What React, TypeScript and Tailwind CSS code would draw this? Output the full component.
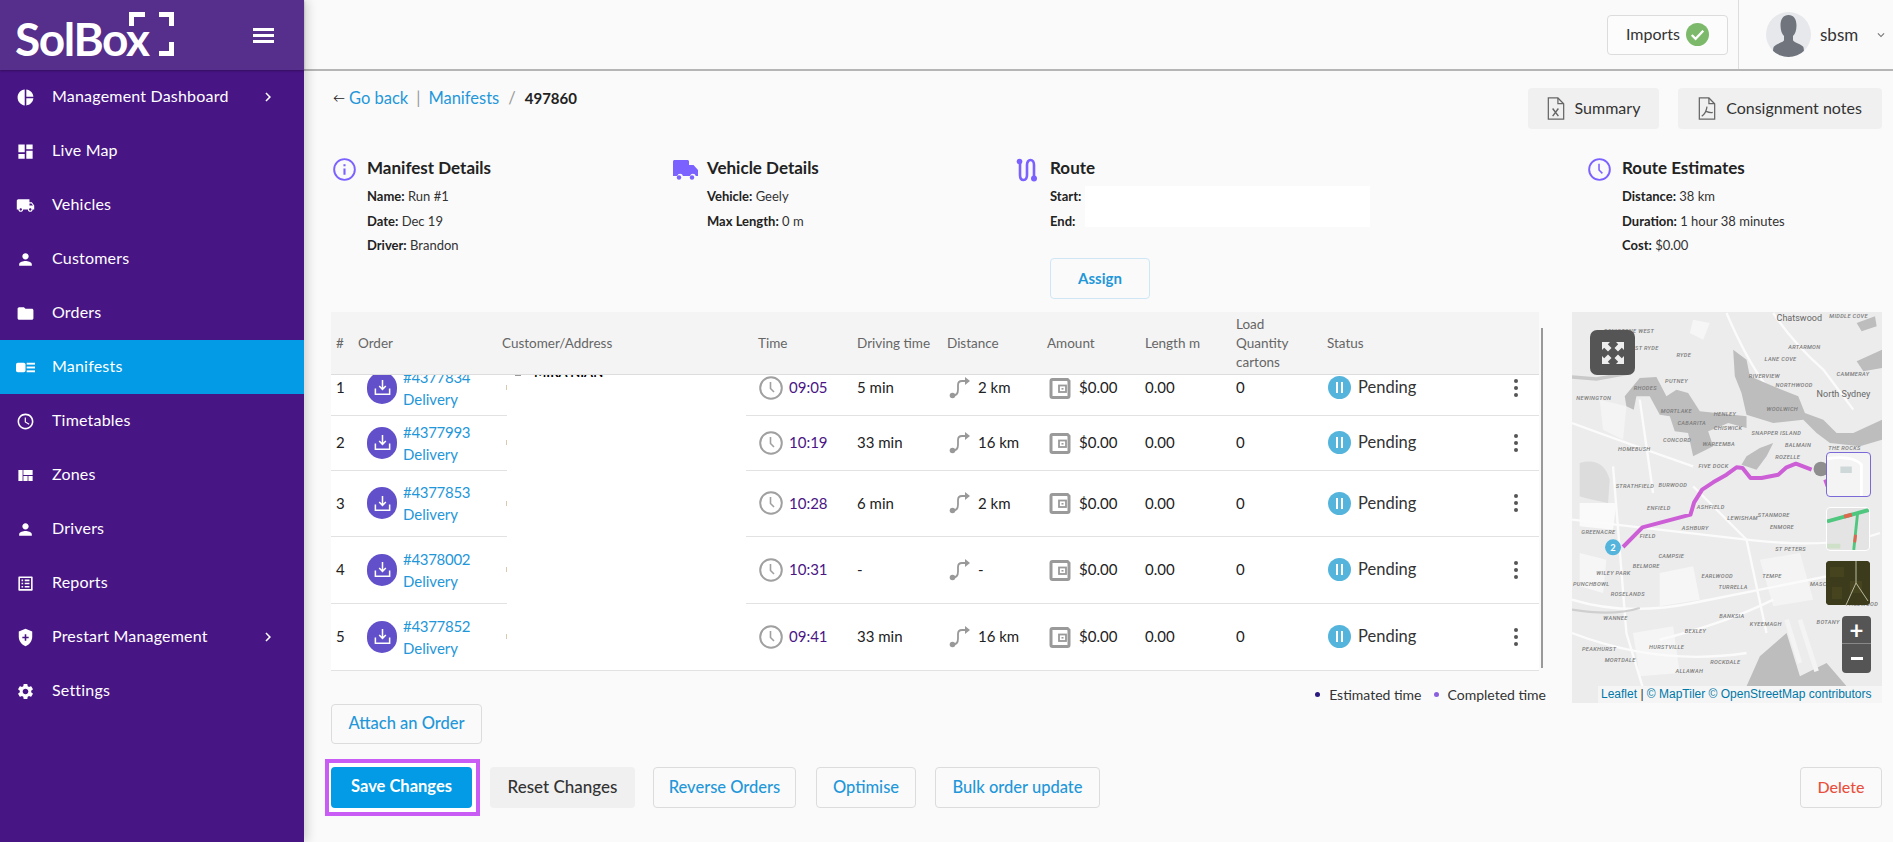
import {
  MdAccessTime,
  MdChevronRight,
  MdDashboard,
  MdFolder,
  MdKeyboardArrowDown,
  MdListAlt,
  MdLocalShipping,
  MdPerson,
  MdPieChart,
  MdSettings,
  MdViewQuilt,
} from "react-icons/md"

const ManifestIcon = ({ className }: { className?: string }) => (
  <svg viewBox="0 0 16 16" className={className} fill="currentColor">
    <rect x="0" y="4" width="8" height="8" rx="1.5" />
    <rect x="9" y="4" width="7" height="1.6" />
    <rect x="9" y="7.2" width="7" height="1.6" />
    <rect x="9" y="10.4" width="7" height="1.6" />
  </svg>
)

const ShieldIcon = ({ className }: { className?: string }) => (
  <svg viewBox="0 0 24 24" className={className}>
    <path fill="currentColor" d="M12 1 3.5 4.5v6.6c0 5.4 3.6 10.300 8.500 11.900 4.900-1.600 8.500-6.500 8.500-11.900V4.500L12 1z" />
    <path fill="#481585" d="M11 8h2v3h3v2h-3v3h-2v-3H8v-2h3z" />
  </svg>
)

const navItems = [
  { label: "Management Dashboard", icon: MdPieChart, arrow: true },
  { label: "Live Map", icon: MdDashboard },
  { label: "Vehicles", icon: MdLocalShipping },
  { label: "Customers", icon: MdPerson },
  { label: "Orders", icon: MdFolder },
  { label: "Manifests", icon: ManifestIcon, active: true },
  { label: "Timetables", icon: MdAccessTime },
  { label: "Zones", icon: MdViewQuilt },
  { label: "Drivers", icon: MdPerson },
  { label: "Reports", icon: MdListAlt },
  { label: "Prestart Management", icon: ShieldIcon, arrow: true },
  { label: "Settings", icon: MdSettings },
]

const rows = [
  { no: 1, order: "#4377834", time: "09:05", drive: "5 min", dist: "2 km", h: "h-[55px]" },
  { no: 2, order: "#4377993", time: "10:19", drive: "33 min", dist: "16 km", h: "h-[55px]" },
  { no: 3, order: "#4377853", time: "10:28", drive: "6 min", dist: "2 km", h: "h-[66px]" },
  { no: 4, order: "#4378002", time: "10:31", drive: "-", dist: "-", h: "h-[67px]" },
  { no: 5, order: "#4377852", time: "09:41", drive: "33 min", dist: "16 km", h: "h-[67px]" },
]

const cols = "grid grid-cols-[27px_144px_256px_99px_90px_100px_98px_91px_91px_1fr]"

const Logo = () => (
  <div className="relative w-[180px] h-[70px]">
    <div className="pl-[15px] pt-[11px] text-[46px] leading-[56px] font-bold text-white tracking-[-1.4px]">SolBox</div>
    <svg className="absolute left-0 top-0" width="180" height="70" viewBox="0 0 180 70" fill="#ffffff">
      <path d="M129 12h16v5h-11v9h-5z" />
      <path d="M159 12h15v14h-5v-9h-10z" />
      <path d="M169 42h5v14h-15v-5h10z" />
    </svg>
  </div>
)

const Sidebar = () => (
  <aside className="w-[304px] shrink-0 min-h-[842px] bg-[#481585] shadow-[3px_0_10px_rgba(0,0,0,0.18)] z-10">
    <div className="h-[70px] bg-[#562e8c] flex items-center justify-between pr-[30px] shadow-[0_1px_2px_rgba(0,0,0,0.3)]">
      <Logo />
      <div className="flex flex-col gap-[3px] w-[21px]">
        <span className="h-[3px] bg-white" />
        <span className="h-[3px] bg-white" />
        <span className="h-[3px] bg-white" />
      </div>
    </div>
    {navItems.map((item) => {
      const Icon = item.icon
      return (
        <div
          key={item.label}
          className={`h-[54px] flex items-center text-[16px] tracking-[0.2px] text-white ${item.active ? "bg-[#039be5]" : ""}`}
        >
          <span className="w-[52px] flex justify-center pr-[2px]">
            <Icon className="w-[19px] h-[19px]" />
          </span>
          <span className="flex-1 pb-[2px]">{item.label}</span>
          {item.arrow && <MdChevronRight className="w-[18px] h-[18px] mr-[27px]" />}
        </div>
      )
    })}
  </aside>
)

const CheckCircle = () => (
  <svg viewBox="0 0 24 24" className="w-[23px] h-[23px]">
    <circle cx="12" cy="12" r="12" fill="#7cb96a" />
    <path d="M6 12.500l4 4 8-8.500" fill="none" stroke="#fff" strokeWidth="2.400" />
  </svg>
)

const Avatar = () => (
  <svg viewBox="0 0 45 45" className="w-[45px] h-[45px] rounded-full bg-[#e7e8ec]">
    <path
      fill="#6f747d"
      d="M22.500 3c5 0 8 4 8 10.500 0 5-1.500 8.500-3.500 10.500v4c0 2 7 3.500 10 6.500 1 1.500 1 4 1 10.500H7c0-6.500 0-9 1-10.500 3-3 10-4.500 10-6.500v-4c-2-2-3.500-5.500-3.500-10.500C14.500 7 17.500 3 22.500 3z"
    />
  </svg>
)

const FileIcon = ({ mark }: { mark: "x" | "pdf" }) => (
  <svg viewBox="0 0 18 24" className="w-[18px] h-[23px]" fill="none" stroke="#666" strokeWidth="1.300">
    <path d="M1 1h10l6 6v16H1z" />
    <path d="M11 1v6h6" />
    {mark === "x" ? (
      <path d="M5.500 12l6 8M11.500 12l-6 8" strokeWidth="1.500" />
    ) : (
      <path d="M9 10c-.5 4-2.500 8-5.500 10M8 15c2.500 1 5 1.500 7 1" />
    )}
  </svg>
)

const InfoIcon = () => (
  <svg viewBox="0 0 24 24" className="w-[23px] h-[23px]" fill="none" stroke="#7b61ff" strokeWidth="2">
    <circle cx="12" cy="12" r="10.800" />
    <path d="M12 11v6.500M12 6.500v2" strokeWidth="2.200" />
  </svg>
)

const ClockIcon = ({ color, className }: { color: string; className: string }) => (
  <svg viewBox="0 0 24 24" className={className} fill="none" stroke={color} strokeWidth="2">
    <circle cx="12" cy="12" r="10.800" />
    <path d="M11.500 6v6.500l3.500 3.500" strokeWidth="1.600" />
  </svg>
)

const TruckIcon = () => (
  <svg viewBox="0 0 25 24" className="w-[25px] h-[24px]" fill="#7b61ff">
    <path d="M1.500 2h13c.8 0 1.500.7 1.500 1.500V7h4.500l4.500 5v6h-2.200a3 3 0 0 0-5.800 0h-7a3 3 0 0 0-5.800 0H0V3.500C0 2.700.7 2 1.500 2z" />
    <circle cx="6" cy="19.500" r="2.200" />
    <circle cx="19" cy="19.500" r="2.200" />
  </svg>
)

const RouteIcon = () => (
  <svg viewBox="0 0 22 24" className="w-[22px] h-[24px]" fill="none" stroke="#7b61ff" strokeWidth="2.600">
    <path d="M4 4v13c0 3 1 5 3.500 5S11 20 11 17V7c0-3 1.500-5 3.500-5S18 4 18 7v11" />
    <circle cx="3.500" cy="3.500" r="2.800" fill="#7b61ff" stroke="none" />
    <circle cx="18" cy="20.500" r="3" fill="#7b61ff" stroke="none" />
  </svg>
)

const DetailBlock = ({
  icon,
  title,
  items,
  children,
}: {
  icon: React.ReactNode
  title: string
  items: [string, string][]
  children?: React.ReactNode
}) => (
  <div className="flex">
    <div className="pt-[2px] w-[34px] shrink-0">{icon}</div>
    <div className="relative flex-1">
      <div className="h-[24px] leading-[24px] text-[17px] font-bold text-[#222]">{title}</div>
      <div className="mt-[4px] flex flex-col text-[13px] text-[#333]">
        {items.map(([k, v]) => (
          <div key={k} className="h-[24.500px] leading-[24px]">
            <span className="font-bold text-[#222]">{k}</span> {v}
          </div>
        ))}
      </div>
      {children}
    </div>
  </div>
)

const OrderIcon = () => (
  <span className="w-[30px] h-[32px] rounded-full bg-[#6150c9] flex items-center justify-center shrink-0">
    <svg viewBox="0 0 20 20" className="w-[19px] h-[19px]" fill="none" stroke="#fff" strokeWidth="1.600">
      <path d="M10 2v10M6.500 8.500 10 12l3.500-3.500" />
      <path d="M2.500 11v6h15v-6" />
    </svg>
  </span>
)

const DistanceIcon = () => (
  <svg viewBox="0 0 24 24" className="w-[24px] h-[24px]" fill="none" stroke="#999" strokeWidth="1.800">
    <circle cx="4.500" cy="19.500" r="2.800" fill="#999" stroke="none" />
    <path d="M5 19.500c4 0 5-2 5-6V9c0-3 1-4 4-4h4" />
    <path d="M17 1l5 4-5 4z" fill="#999" stroke="none" />
  </svg>
)

const WalletIcon = () => (
  <svg viewBox="0 0 22 24" className="w-[22px] h-[24px]" fill="none" stroke="#9a9a9a" strokeWidth="3">
    <path d="M18.500 3.500H3.500A1.500 1.500 0 0 0 2 5v15a1.500 1.500 0 0 0 1.500 1.500h15A1.500 1.500 0 0 0 20 20V5z" />
    <rect x="10" y="9.500" width="7" height="6.500" strokeWidth="1.800" />
    <rect x="12.500" y="12" width="2" height="1.600" fill="#9a9a9a" stroke="none" />
  </svg>
)

const PauseIcon = () => (
  <span className="w-[23px] h-[23px] rounded-full bg-[#54b4dc] flex items-center justify-center gap-[3px] shrink-0">
    <span className="w-[2px] h-[11px] bg-white" />
    <span className="w-[2px] h-[11px] bg-white" />
  </span>
)

const Kebab = () => (
  <span className="flex flex-col gap-[3px] ml-auto mr-[21px]">
    <span className="w-[4px] h-[4px] rounded-full bg-[#555]" />
    <span className="w-[4px] h-[4px] rounded-full bg-[#555]" />
    <span className="w-[4px] h-[4px] rounded-full bg-[#555]" />
  </span>
)

const Table = () => (
  <div className="relative w-[1208px]">
    <div className={`${cols} h-[63px] bg-[#f4f4f4] border-b border-[#ddd] items-center text-[13.500px] text-[#666]`}>
      <div className="pl-[5px]">#</div>
      <div>Order</div>
      <div>Customer/Address</div>
      <div>Time</div>
      <div>Driving time</div>
      <div>Distance</div>
      <div>Amount</div>
      <div>Length m</div>
      <div className="leading-[19px]">
        Load
        <br />
        Quantity
        <br />
        cartons
      </div>
      <div>Status</div>
    </div>
    <div className="relative h-[296px] overflow-hidden bg-white">
      <div className="-mt-[14px]">
        {rows.map((r) => (
          <div key={r.no} className={`${cols} ${r.h} pb-[1px] border-b border-[#e2e2e2] items-center text-[15px] text-[#222]`}>
            <div className="pl-[5px]">{r.no}</div>
            <div className="flex items-center pl-[9px] gap-[6px]">
              <OrderIcon />
              <div className="text-[#1f97d9] leading-[22px]">
                <div className="tracking-[-0.3px]">{r.order}</div>
                <div>Delivery</div>
              </div>
            </div>
            <div className="pl-[4px]">
              <span className="block w-[1px] h-[5px] bg-[#d9c9ae]" />
            </div>
            <div className="flex items-center gap-[6px] pl-[1px]">
              <ClockIcon color="#a0a0a0" className="w-[24px] h-[24px]" />
              <span className="text-[#4a1585]">{r.time}</span>
            </div>
            <div>{r.drive}</div>
            <div className="flex items-center gap-[6px] pl-[1px]">
              <DistanceIcon />
              <span>{r.dist}</span>
            </div>
            <div className="flex items-center gap-[8px] pl-[2px]">
              <WalletIcon />
              <span>$0.00</span>
            </div>
            <div>0.00</div>
            <div>0</div>
            <div className="flex items-center gap-[7px] pl-[1px]">
              <PauseIcon />
              <span className="text-[16.500px] text-[#333]">Pending</span>
              <Kebab />
            </div>
          </div>
        ))}
      </div>
      <div className="absolute left-[176px] top-0 w-[239px] h-[291px] bg-white">
        <div className="absolute left-[8px] top-0 w-[6px] h-[1px] bg-[#999]" />
        <div className="absolute left-[27px] top-0 h-[3px] overflow-hidden text-[13px] font-bold leading-[14px] text-black">
          <div className="-mt-[10px]">MIRA NIAN</div>
        </div>
      </div>
    </div>
    <div className="absolute left-[1210px] top-[16px] w-[2px] h-[340px] bg-[#999]" />
  </div>
)

const mapLabels: [string, number, number][] = [
  ["MIDDLE COVE", 808, 55], ["ARTARMON", 685, 147], ["LANE COVE", 614, 185], ["CAMMERAY", 830, 230],
  ["RIVERVIEW", 567, 235], ["NORTHWOOD", 647, 263], ["WOOLWICH", 620, 335], ["HENLEY", 462, 348],
  ["CABARITA", 353, 377], ["CHISWICK", 462, 392], ["SNAPPER ISLAND", 575, 406], ["WAREEMBA", 428, 438],
  ["BALMAIN", 675, 443], ["CONCORD", 310, 427], ["HOMEBUSH", 175, 455], ["THE ROCKS", 805, 451],
  ["ROZELLE", 646, 478], ["FIVE DOCK", 416, 505], ["STRATHFIELD", 168, 566], ["BURWOOD", 296, 561],
  ["ENFIELD", 262, 630], ["ASHFIELD", 411, 627], ["LEWISHAM", 502, 662], ["STANMORE", 594, 652],
  ["ENMORE", 630, 687], ["ASHBURY", 366, 690], ["GREENACRE", 65, 702], ["FIELD", 240, 716],
  ["ST PETERS", 646, 755], ["CAMPSIE", 296, 775], ["BELMORE", 219, 804], ["WILEY PARK", 110, 825],
  ["EARLWOOD", 425, 836], ["TEMPE", 607, 836], ["PUNCHBOWL", 40, 860], ["TURRELLA", 476, 868],
  ["MASCOT", 750, 860], ["ROSELANDS", 153, 890], ["BANKSIA", 478, 955], ["WANNEE", 131, 960],
  ["KYEEMAGH", 570, 980], ["BOTANY", 770, 972], ["BEXLEY", 375, 999], ["PEAKHURST", 67, 1055],
  ["HURSTVILLE", 268, 1049], ["MORTDALE", 135, 1088], ["ROCKDALE", 451, 1094], ["ALLAWAH", 347, 1120],
  ["RYDE", 350, 172], ["PUTNEY", 316, 251], ["RHODES", 222, 270], ["NEWINGTON", 50, 300],
  ["MORTLAKE", 303, 340], ["WEST RYDE", 200, 152], ["DENISTONE WEST", 133, 100], ["PAGEWOOD", 858, 920],
]

const whiteRoads = [
  "M37 660 Q300 690 560 720 T960 700",
  "M37 900 Q200 950 400 910 T800 830",
  "M160 500 L200 1000 L260 1200",
  "M500 40 Q560 180 620 260",
  "M640 40 Q700 130 790 210 L880 330",
  "M37 370 Q200 430 400 500",
  "M400 560 L560 720 L620 1000",
  "M300 1020 Q500 970 640 900",
  "M37 1000 Q300 1100 560 1060",
  "M240 300 L280 580",
]

const MapDrawing = () => (
  <svg className="block w-[310px] h-[391px]" viewBox="37 37 929 1173" preserveAspectRatio="none">
    <rect x="37" y="37" width="929" height="1173" fill="#ececec" />
    <path d="M60 490 Q130 470 150 540 L145 610 Q90 600 60 590z" fill="#dcdcdc" />
    <path d="M60 610 L170 610 L160 690 L60 680z" fill="#fafafa" />
    <path d="M400 60 L450 70 L430 120 L390 100z" fill="#f6f6f6" />
    <path d="M120 300 L200 320 L190 420 L130 390z" fill="#f4f4f4" />
    <path d="M600 780 L720 760 L760 900 L640 920z" fill="#f4f4f4" />
    <path d="M300 820 L400 800 L420 900 L300 920z" fill="#f6f6f6" />
    <path d="M60 760 L140 780 L130 880 L60 860z" fill="#f6f6f6" />
    <path d="M220 1000 L340 980 L360 1120 L240 1130z" fill="#f5f5f5" />
    {whiteRoads.map((d) => (
      <path key={d} d={d} fill="none" stroke="#fbfbfb" strokeWidth="7" />
    ))}
    <g fill="#bdbdbd">
      <path d="M195 290 L240 235 L290 232 L320 290 L350 270 L385 280 L420 335 L470 340 L520 345 L560 350 L560 385 L505 370 L470 385 L445 395 L460 440 L400 470 L385 400 L345 395 L330 350 L300 345 L270 290 L230 290 L222 330 L200 320z" />
      <path d="M520 150 L560 180 L570 230 L640 260 L715 290 L735 340 L790 360 L830 400 L880 400 L966 360 L966 420 L900 440 L810 430 L770 400 L730 360 L640 370 L560 345 L545 280 L525 230z" />
      <path d="M560 470 L600 445 L640 430 L620 470 L590 510 L545 495z" />
      <path d="M890 185 L966 150 L966 205 L910 215z" />
      <path d="M890 70 L945 50 L950 80 L905 95z" />
      <path d="M560 1160 L600 1070 L680 1000 L720 1130 L800 1090 L860 1160z" />
    </g>
    <path d="M37 232 L110 238 L200 222" fill="none" stroke="#c9c9c9" strokeWidth="10" />
    <path d="M680 960 L720 1090M720 960 L770 1115" stroke="#f4f4f4" strokeWidth="14" />
    <path d="M37 930 Q160 950 240 925" fill="none" stroke="#cfcfcf" strokeWidth="7" />
    <g fontFamily="Roboto, sans-serif" fontStyle="italic" fontWeight="500" fontSize="17" fill="#7a7a7a" letterSpacing="1">
      {mapLabels.map(([t, x, y]) => (
        <text key={t} x={x} y={y}>
          {t}
        </text>
      ))}
    </g>
    <g fontFamily="Roboto, sans-serif" fontSize="27" fill="#666">
      <text x="650" y="65">Chatswood</text>
      <text x="770" y="293">North Sydney</text>
    </g>
    <polyline
      points="190,742 248,683 392,645 403,608 427,570 460,548 500,525 530,503 548,505 572,535 605,535 655,525 680,503 708,492 755,510"
      fill="none"
      stroke="#cc5fd6"
      strokeWidth="12"
      strokeLinejoin="round"
    />
    <path d="M795 540 L802 560" stroke="#cc5fd6" strokeWidth="10" />
    <circle cx="783" cy="508" r="22" fill="#8e8e8e" />
    <circle cx="160" cy="743" r="24" fill="#54b4dc" />
    <text x="160" y="753" textAnchor="middle" fontFamily="Lato, sans-serif" fontWeight="700" fontSize="28" fill="#fff">
      2
    </text>
  </svg>
)

const MapPanel = () => (
  <div className="relative w-[310px] h-[391px] overflow-hidden">
    <MapDrawing />
    <div className="absolute left-[18px] top-[18px] w-[45px] h-[45px] rounded-[7px] bg-[#555] flex items-center justify-center">
      <svg viewBox="0 0 24 24" className="w-[24px] h-[24px]" fill="#eee">
        <path d="M1 1h8L6.800 3.200 10.500 7 7 10.500 3.200 6.800 1 9zM23 1v8l-2.200-2.200L17 10.500 13.500 7l3.700-3.800L15 1zM1 23v-8l2.200 2.200L7 13.500l3.500 3.500-3.700 3.800L9 23zM23 23h-8l2.200-2.200L13.500 17l3.500-3.500 3.800 3.700L23 15z" />
      </svg>
    </div>
    <div className="absolute left-[254px] top-[140px] w-[45px] h-[45px] rounded-[4px] border border-[#7a6ad8] bg-[#f4f4f4] overflow-hidden">
      <svg viewBox="0 0 45 45" className="w-full h-full">
        <path d="M14 14h12v7H14z" fill="#cfd8d8" />
        <path d="M0 6q26-4 36 6v33" fill="none" stroke="#fff" strokeWidth="3" />
      </svg>
    </div>
    <div className="absolute left-[254px] top-[195px] w-[44px] h-[44px] rounded-[4px] border border-white bg-[#e4e4e4] overflow-hidden">
      <svg viewBox="0 0 44 44" className="w-full h-full">
        <path d="M0 14 44 2" stroke="#4fc77f" strokeWidth="4" />
        <path d="M18 9 26 7" stroke="#e0664f" strokeWidth="4" />
        <path d="M32 6 28 44" stroke="#4fc77f" strokeWidth="3" />
        <path d="M30 28 29 36" stroke="#e0664f" strokeWidth="3" />
        <path d="M0 40h14" stroke="#cfe0c8" strokeWidth="5" />
      </svg>
    </div>
    <div className="absolute left-[254px] top-[249px] w-[44px] h-[44px] rounded-[4px] bg-[#3d3e1e] overflow-hidden">
      <svg viewBox="0 0 44 44" className="w-full h-full">
        <rect x="0" y="0" width="44" height="44" fill="#3c3c1c" />
        <path d="M4 6h14v10H4zM24 20h12v12H24zM6 26h10v12H6z" fill="#46441f" />
        <path d="M30 0v22L20 44M30 22l12 18" fill="none" stroke="#b8b8a0" strokeWidth="1" />
      </svg>
    </div>
    <div className="absolute left-[270px] top-[304px] w-[29px] h-[57px] rounded-[4px] bg-[#555] flex flex-col text-white">
      <div className="h-[28px] border-b border-[#888] flex items-center justify-center">
        <span className="text-[24px] leading-none font-bold">+</span>
      </div>
      <div className="flex-1 flex items-center justify-center">
        <span className="w-[12px] h-[3px] bg-white" />
      </div>
    </div>
    <div className="absolute right-0 bottom-0 w-[284px] h-[17px] bg-[#f5f5f5] pl-[3px] font-['Liberation_Sans',sans-serif] text-[12px] leading-[17px] text-[#0078a8] whitespace-nowrap">
      Leaflet <span className="text-[#333]">|</span> © MapTiler © OpenStreetMap contributors
    </div>
  </div>
)

const OutlineButton = ({ label, className }: { label: string; className: string }) => (
  <button className={`rounded-[4px] border border-[#dcdcdc] pb-[1px] text-[16.500px] font-medium text-[#1f97d9] ${className}`}>
    {label}
  </button>
)

const App = () => {
  return (
    <div className="flex min-h-[842px] bg-[#fafafa] font-['Lato',sans-serif]">
      <Sidebar />
      <main className="flex-1 min-w-0">
        <header className="h-[71px] border-b-2 border-[#b5b5b5] flex items-center justify-end">
          <div className="h-[40px] w-[121px] mr-[10px] rounded-[4px] border border-[#dcdcdc] bg-white/40 flex items-center justify-center gap-[6px] text-[16px] text-[#333]">
            <span className="pb-[1px]">Imports</span>
            <CheckCircle />
          </div>
          <div className="h-[69px] border-l border-[#ddd] pl-[27px] pr-[5px] flex items-center">
            <Avatar />
            <span className="ml-[9px] w-[41px] text-[17px] text-[#333]">sbsm</span>
            <MdKeyboardArrowDown className="ml-[13px] w-[14px] h-[14px] text-[#777]" />
          </div>
        </header>

        <div className="pl-[27px] pr-[11px] pt-[17px]">
          <div className="flex justify-between items-start h-[41px]">
            <div className="h-[20px] flex items-center text-[16.500px] text-[#1f97d9] pl-[2px]">
              <span className="text-[#222] text-[12px] w-[16px]">←</span>
              <span>Go back</span>
              <span className="mx-[8px] text-[#999]">|</span>
              <span>Manifests</span>
              <span className="mx-[9px] text-[#999]">/</span>
              <span className="font-bold text-[15px] text-[#222]">497860</span>
            </div>
            <div className="flex gap-[19px] text-[16px] text-[#333]">
              <button className="h-[41px] w-[131px] rounded-[4px] bg-[#f0f0f0] flex items-center justify-center gap-[10px]">
                <FileIcon mark="x" />
                <span className="pb-[2px]">Summary</span>
              </button>
              <button className="h-[41px] w-[204px] rounded-[4px] bg-[#f0f0f0] flex items-center justify-center gap-[10px]">
                <FileIcon mark="pdf" />
                <span className="pb-[2px]">Consignment notes</span>
              </button>
            </div>
          </div>

          <div className="mt-[27px] grid grid-cols-[340px_343px_572px_1fr] pl-[2px]">
            <DetailBlock
              icon={<InfoIcon />}
              title="Manifest Details"
              items={[
                ["Name:", "Run #1"],
                ["Date:", " Dec 19"],
                ["Driver:", "Brandon"],
              ]}
            />
            <DetailBlock
              icon={<TruckIcon />}
              title="Vehicle Details"
              items={[
                ["Vehicle:", "Geely"],
                ["Max Length:", "0 m"],
              ]}
            />
            <DetailBlock
              icon={<RouteIcon />}
              title="Route"
              items={[
                ["Start:", ""],
                ["End:", ""],
              ]}
            >
              <div className="absolute left-[35px] top-[30px] w-[285px] h-[41px] bg-white" />
              <button className="mt-[25px] block w-[100px] h-[41px] rounded-[4px] border border-[#cfe6f5] pb-[1px] text-[15px] font-bold text-[#1f97d9]">
                Assign
              </button>
            </DetailBlock>
            <DetailBlock
              icon={<ClockIcon color="#7b61ff" className="w-[23px] h-[23px]" />}
              title="Route Estimates"
              items={[
                ["Distance:", "38 km"],
                ["Duration:", "1 hour 38 minutes"],
                ["Cost:", "$0.00"],
              ]}
            />
          </div>

          <div className="mt-[13px] flex justify-between items-start">
            <div className="w-[1215px]">
              <Table />
              <div className="mt-[15px] h-[16px] flex justify-end items-center text-[14px] text-[#333]">
                <span className="w-[5px] h-[5px] rounded-full bg-[#2b1a80] mr-[9px]" />
                Estimated time
                <span className="w-[5px] h-[5px] rounded-full bg-[#8b5fe0] ml-[12px] mr-[9px]" />
                Completed time
              </div>
              <OutlineButton label="Attach an Order" className="mt-[2px] w-[151px] h-[40px] block" />
            </div>
            <MapPanel />
          </div>

          <div className="mt-[23px] flex items-center">
            <div className="-my-[8px] -ml-[6px] border-4 border-[#c85cf5] bg-white pl-[2px] pr-[4px] py-[4px]">
              <button className="block h-[41px] w-[141px] rounded-[4px] bg-[#039be5] pb-[2px] text-[16.500px] font-bold text-white">
                Save Changes
              </button>
            </div>
            <button className="ml-[10px] h-[41px] w-[145px] rounded-[4px] bg-[#f0f0f0] pb-[2px] text-[17px] font-medium text-[#333]">
              Reset Changes
            </button>
            <OutlineButton label="Reverse Orders" className="ml-[18px] w-[143px] h-[41px]" />
            <OutlineButton label="Optimise" className="ml-[20px] w-[100px] h-[41px]" />
            <OutlineButton label="Bulk order update" className="ml-[19px] w-[165px] h-[41px]" />
            <button className="ml-auto h-[41px] w-[82px] rounded-[4px] border border-[#dcdcdc] pb-[1px] text-[16px] font-medium text-[#e8503e]">
              Delete
            </button>
          </div>
        </div>
      </main>
    </div>
  )
}

export default App
